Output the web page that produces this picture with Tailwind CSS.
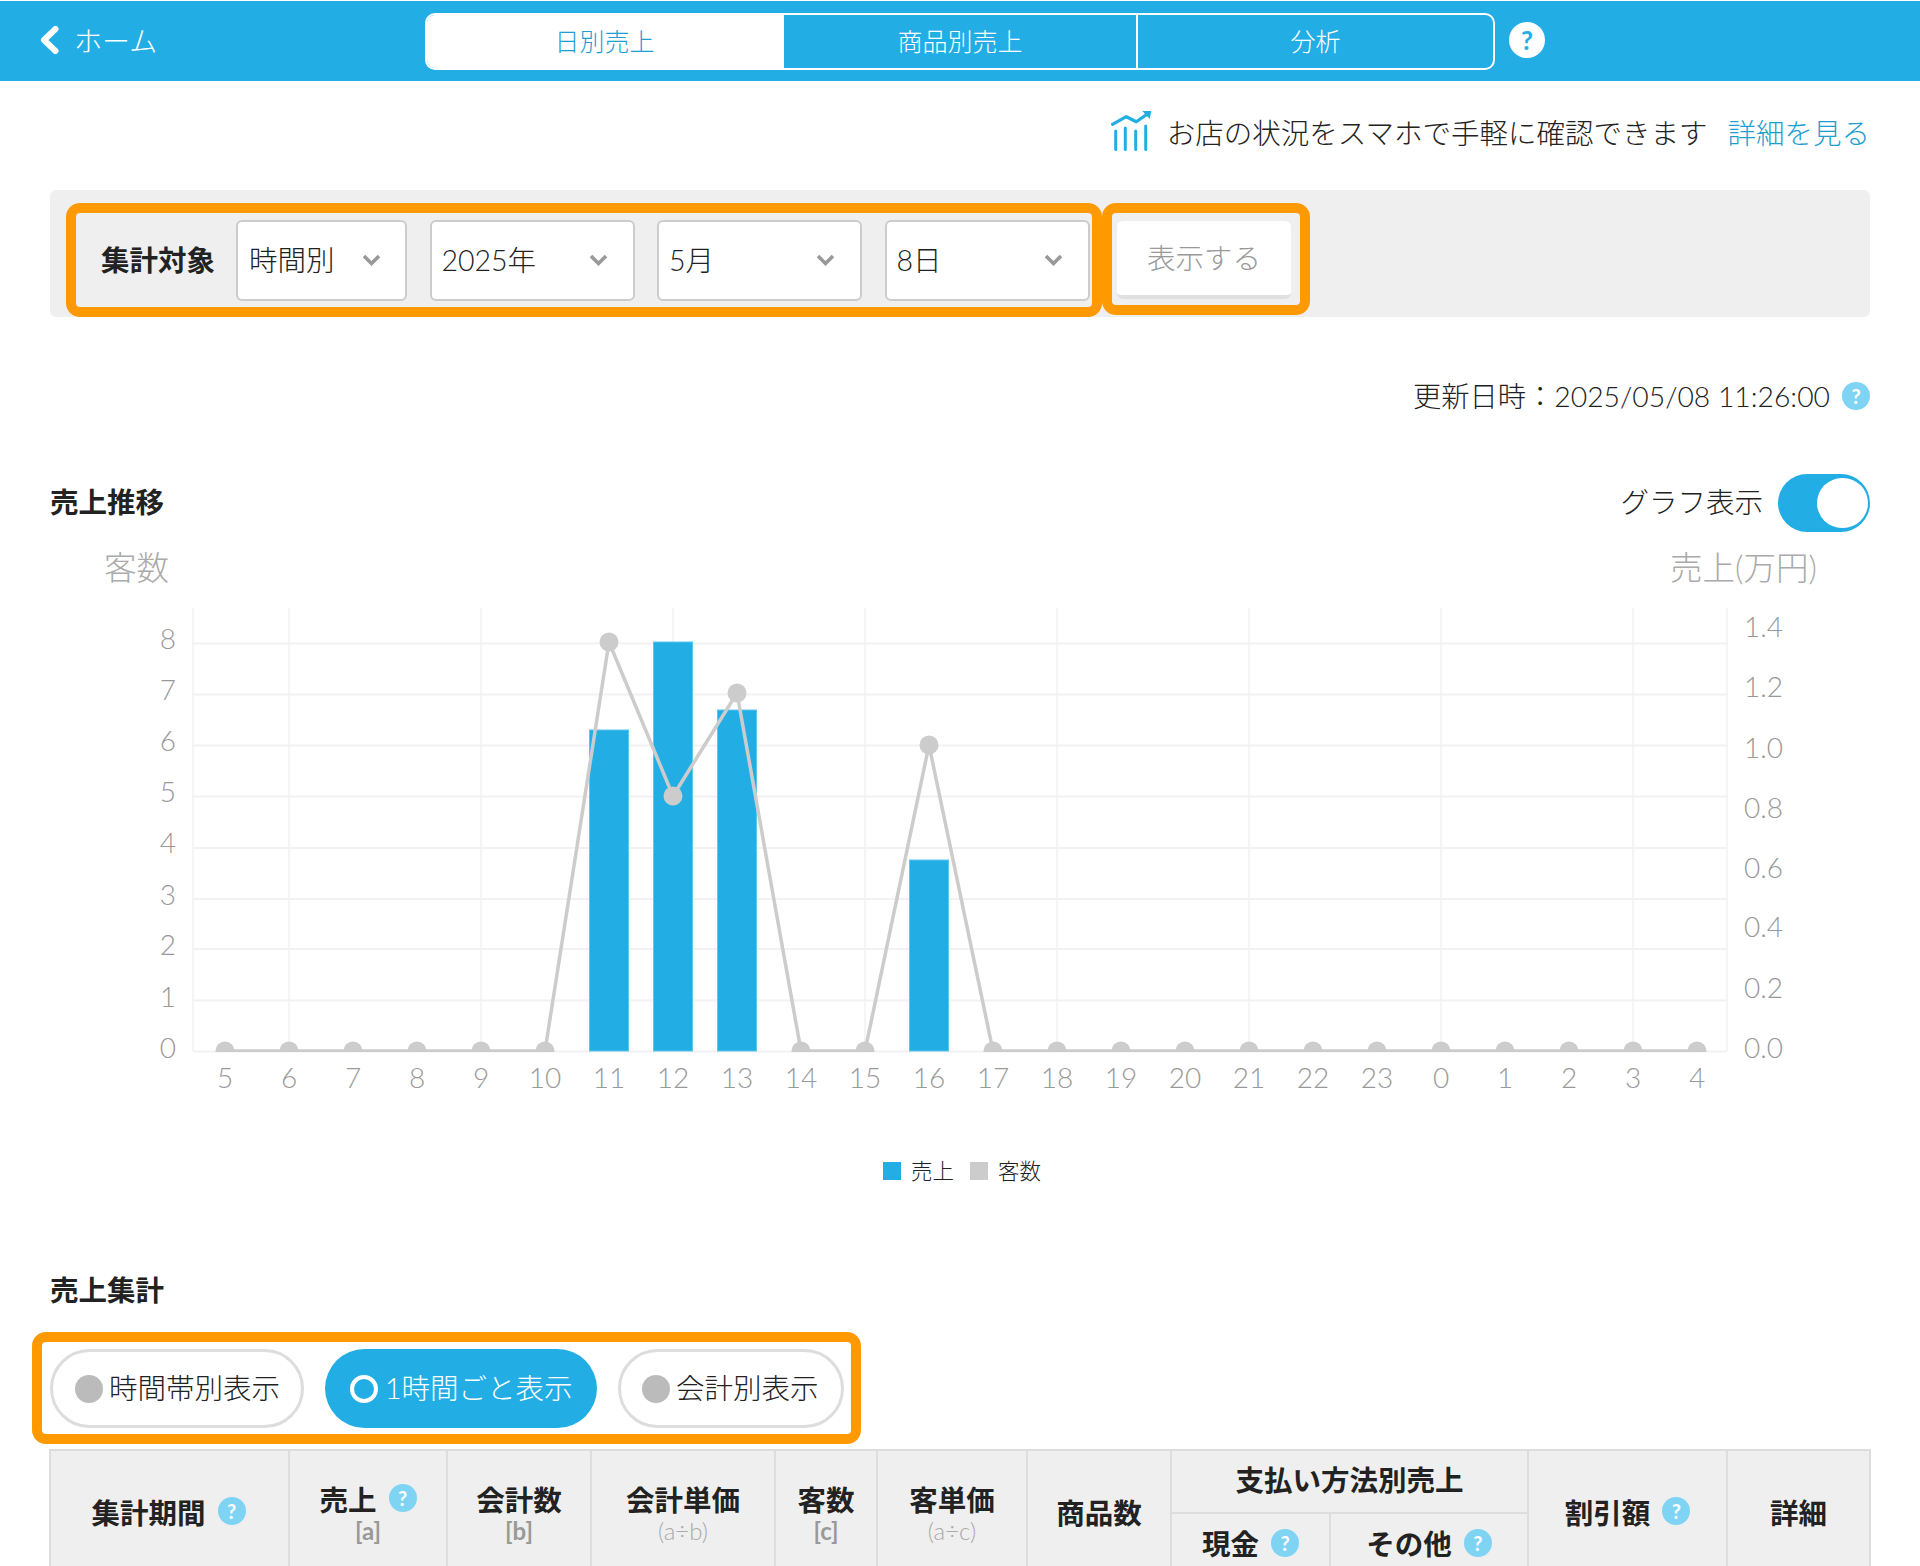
<!DOCTYPE html>
<html lang="ja">
<head>
  <meta charset="UTF-8">
  <meta name="viewport" content="width=device-width, initial-scale=1.0">
  <title>売上集計</title>
  <script src="https://cdn.jsdelivr.net/npm/@tailwindcss/browser@4"></script>
</head>
<body class="bg-white">
  <div class="w-[1920px] h-[1566px] overflow-hidden pt-px font-['Lato','Noto_Sans_CJK_JP',sans-serif] text-[28.5px] leading-none text-[#222]">

    <!-- header -->
    <header class="h-20 bg-[#22aee5] flex items-center text-white">
      <div class="w-[425px] pl-10 flex items-center gap-[15px]">
        <svg class="w-[19px] h-[28px] -mt-[2px]" viewBox="0 0 19 28" fill="none"><path d="M15.5 3 L4 14 L15.5 25" stroke="#fff" stroke-width="6" stroke-linecap="round" stroke-linejoin="round"/></svg>
        <span class="text-[28px] font-light">ホーム</span>
      </div>
      <div class="flex w-[1070px] h-[57px] border-2 border-white rounded-[10px] overflow-hidden text-[25px] font-light">
        <div class="w-[357px] pr-[2px] bg-white text-[#1f9ed1] flex items-center justify-center">日別売上</div>
        <div class="w-[354px] border-r-2 border-white flex items-center justify-center">商品別売上</div>
        <div class="flex-1 flex items-center justify-center">分析</div>
      </div>
      <span class="ml-[14px] -mt-[3px] w-9 h-9 rounded-full bg-white text-[#22aee5] font-bold text-[26px] flex items-center justify-center">?</span>
    </header>

    <main class="px-[50px]">
      <!-- notice -->
      <div class="h-[109px] flex items-center justify-end font-light">
        <svg class="w-[42px] h-[40px] mr-[14px] -mt-[9px]" viewBox="0 0 42 40" fill="none">
          <g stroke="#22aee5" stroke-width="3" stroke-linecap="round">
            <path d="M4.7 20 V38.5"/><path d="M14.3 17 V38.5"/><path d="M24.7 20 V38.5"/><path d="M34.7 15 V38.5"/>
          </g>
          <path d="M1.5 13.3 L15.3 5.7 L25.3 10.7 L36 3.2" stroke="#22aee5" stroke-width="3.2" stroke-linecap="round" stroke-linejoin="round"/>
          <path d="M31.3 0 H40.3 L38.7 8 Z" fill="#22aee5"/>
        </svg>
        <span class="-mt-[4px]">お店の状況をスマホで手軽に確認できます</span>
        <a class="-mt-[4px] ml-[20px] text-[#1f9ed1]">詳細を見る</a>
      </div>

      <!-- filter -->
      <div class="h-[127px] bg-[#efefef] rounded-md flex items-start pl-4 pt-[13px] w-[1820px]">
        <div class="w-[1036px] h-[114px] border-[10px] border-[#ff9900] rounded-[14px] flex items-center pl-[25px]">
          <span class="w-[135px] font-bold">集計対象</span>
          <div class="w-[171px] h-[81px] bg-white border-2 border-[#ccc] rounded-md flex items-center justify-between pl-[11px] pr-[24px] font-light">
            <span>時間別</span>
            <svg class="w-[19px] h-[12px]" viewBox="0 0 19 12" fill="none"><path d="M2 2 L9.5 9.5 L17 2" stroke="#999" stroke-width="3.6"/></svg>
          </div>
          <div class="ml-[22.5px] w-[205px] h-[81px] bg-white border-2 border-[#ccc] rounded-md flex items-center justify-between pl-[10px] pr-[25px] font-light">
            <span>2025年</span>
            <svg class="w-[19px] h-[12px]" viewBox="0 0 19 12" fill="none"><path d="M2 2 L9.5 9.5 L17 2" stroke="#999" stroke-width="3.6"/></svg>
          </div>
          <div class="ml-[22.5px] w-[205px] h-[81px] bg-white border-2 border-[#ccc] rounded-md flex items-center justify-between pl-[10px] pr-[25px] font-light">
            <span>5月</span>
            <svg class="w-[19px] h-[12px]" viewBox="0 0 19 12" fill="none"><path d="M2 2 L9.5 9.5 L17 2" stroke="#999" stroke-width="3.6"/></svg>
          </div>
          <div class="ml-[22.5px] w-[205px] h-[81px] bg-white border-2 border-[#ccc] rounded-md flex items-center justify-between pl-[10px] pr-[25px] font-light">
            <span>8日</span>
            <svg class="w-[19px] h-[12px]" viewBox="0 0 19 12" fill="none"><path d="M2 2 L9.5 9.5 L17 2" stroke="#999" stroke-width="3.6"/></svg>
          </div>
        </div>
        <div class="w-[208px] h-[112px] border-[10px] border-[#ff9900] rounded-[14px] flex items-center justify-center pr-[4px] pt-[2px]">
          <button class="w-[174px] h-[78px] bg-white rounded-md border-b-4 border-[#e0e0e0] text-[#999] font-light">表示する</button>
        </div>
      </div>

      <!-- updated -->
      <div class="mt-[64px] h-[29px] flex items-center justify-end gap-3 font-light">
        <span class="mt-[2px] text-[28.3px]">更新日時：2025/05/08 11:26:00</span>
        <span class="w-7 h-7 rounded-full bg-[#7fd4f4] text-white font-bold text-[20px] flex items-center justify-center">?</span>
      </div>

      <!-- trend heading -->
      <div class="mt-[64px] h-[58px] flex items-center justify-between">
        <h2 class="-mt-[2px] font-bold">売上推移</h2>
        <div class="flex items-center gap-[15px] font-light">
          <span class="-mt-[2px]">グラフ表示</span>
          <div class="w-[92px] h-[58px] rounded-full bg-[#22aee5] flex items-center justify-end pr-[2px]">
            <div class="w-[51px] h-[50px] rounded-full bg-white"></div>
          </div>
        </div>
      </div>
    </main>

    <!-- chart -->
    <svg class="block w-[1920px] h-[668px]" viewBox="0 532 1920 668" fill="none">
      <defs>
        <clipPath id="plot"><rect x="193" y="600" width="1534" height="452"/></clipPath>
      </defs>
      <g fill="#aaa" font-size="32.5" font-weight="300">
        <text x="104" y="580">客数</text>
        <text x="1670" y="580">売上(万円)</text>
      </g>

      <g stroke="#f2f2f2" stroke-width="2">
        <path d="M193 643.5 H1727"/><path d="M193 694.5 H1727"/><path d="M193 745.5 H1727"/>
        <path d="M193 796.5 H1727"/><path d="M193 848 H1727"/><path d="M193 899 H1727"/>
        <path d="M193 949 H1727"/><path d="M193 1000.5 H1727"/><path d="M193 1051.5 H1727"/>
      </g>
      <g stroke="#f2f2f2" stroke-width="1.5">
        <path d="M193 608 V1051"/><path d="M289 608 V1051"/><path d="M481 608 V1051"/>
        <path d="M673 608 V1051"/><path d="M865 608 V1051"/><path d="M1057 608 V1051"/>
        <path d="M1249 608 V1051"/><path d="M1441 608 V1051"/><path d="M1633 608 V1051"/>
        <path d="M1727 608 V1051"/>
      </g>

      <g fill="#22aee5" stroke="#5cc6ee" stroke-width="1">
        <rect x="589.5" y="730" width="39" height="321"/>
        <rect x="653.5" y="642" width="39" height="409"/>
        <rect x="717.5" y="710" width="39" height="341"/>
        <rect x="909.5" y="860" width="39" height="191"/>
      </g>

      <g clip-path="url(#plot)">
        <polyline stroke="#ccc" stroke-width="3.5" stroke-linejoin="round" points="225,1051 289,1051 353,1051 417,1051 481,1051 545,1051 609,642 673,796 737,693 801,1051 865,1051 929,745 993,1051 1057,1051 1121,1051 1185,1051 1249,1051 1313,1051 1377,1051 1441,1051 1505,1051 1569,1051 1633,1051 1697,1051"/>
        <g fill="#ccc">
          <circle cx="225" cy="1051" r="9.5"/><circle cx="289" cy="1051" r="9.5"/><circle cx="353" cy="1051" r="9.5"/>
          <circle cx="417" cy="1051" r="9.5"/><circle cx="481" cy="1051" r="9.5"/><circle cx="545" cy="1051" r="9.5"/>
          <circle cx="609" cy="642" r="9.5"/><circle cx="673" cy="796" r="9.5"/><circle cx="737" cy="693" r="9.5"/>
          <circle cx="801" cy="1051" r="9.5"/><circle cx="865" cy="1051" r="9.5"/><circle cx="929" cy="745" r="9.5"/>
          <circle cx="993" cy="1051" r="9.5"/><circle cx="1057" cy="1051" r="9.5"/><circle cx="1121" cy="1051" r="9.5"/>
          <circle cx="1185" cy="1051" r="9.5"/><circle cx="1249" cy="1051" r="9.5"/><circle cx="1313" cy="1051" r="9.5"/>
          <circle cx="1377" cy="1051" r="9.5"/><circle cx="1441" cy="1051" r="9.5"/><circle cx="1505" cy="1051" r="9.5"/>
          <circle cx="1569" cy="1051" r="9.5"/><circle cx="1633" cy="1051" r="9.5"/><circle cx="1697" cy="1051" r="9.5"/>
        </g>
      </g>

      <g fill="#999" font-size="28" font-weight="300" text-anchor="end" dominant-baseline="central">
        <text x="176" y="638">8</text><text x="176" y="689">7</text><text x="176" y="740">6</text>
        <text x="176" y="791">5</text><text x="176" y="842">4</text><text x="176" y="894">3</text>
        <text x="176" y="944">2</text><text x="176" y="996">1</text><text x="176" y="1047">0</text>
      </g>
      <g fill="#999" font-size="28" font-weight="300" dominant-baseline="central">
        <text x="1744" y="626">1.4</text><text x="1744" y="686">1.2</text><text x="1744" y="747">1.0</text>
        <text x="1744" y="807">0.8</text><text x="1744" y="867">0.6</text><text x="1744" y="926">0.4</text>
        <text x="1744" y="987">0.2</text><text x="1744" y="1047">0.0</text>
      </g>
      <g fill="#999" font-size="28" font-weight="300" text-anchor="middle" dominant-baseline="central">
        <text x="225" y="1077">5</text><text x="289" y="1077">6</text><text x="353" y="1077">7</text>
        <text x="417" y="1077">8</text><text x="481" y="1077">9</text><text x="545" y="1077">10</text>
        <text x="609" y="1077">11</text><text x="673" y="1077">12</text><text x="737" y="1077">13</text>
        <text x="801" y="1077">14</text><text x="865" y="1077">15</text><text x="929" y="1077">16</text>
        <text x="993" y="1077">17</text><text x="1057" y="1077">18</text><text x="1121" y="1077">19</text>
        <text x="1185" y="1077">20</text><text x="1249" y="1077">21</text><text x="1313" y="1077">22</text>
        <text x="1377" y="1077">23</text><text x="1441" y="1077">0</text><text x="1505" y="1077">1</text>
        <text x="1569" y="1077">2</text><text x="1633" y="1077">3</text><text x="1697" y="1077">4</text>
      </g>

      <rect x="883" y="1162" width="18" height="18" fill="#22aee5"/>
      <rect x="970" y="1162" width="18" height="18" fill="#ccc"/>
      <g fill="#222" font-size="21.5" font-weight="300" dominant-baseline="central">
        <text x="911" y="1171">売上</text>
        <text x="998" y="1171">客数</text>
      </g>
    </svg>

    <section class="px-[50px]">
      <h2 class="mt-[76px] h-7 flex items-center font-bold">売上集計</h2>

      <div class="-ml-[18px] mt-[28px] w-[829px] h-[112px] border-[10px] border-[#ff9900] rounded-[14px] bg-white flex items-start pl-2 pt-[7px] font-light">
        <div class="w-[254px] h-[79px] rounded-full border-[3px] border-[#ddd] flex items-center pl-[22px] gap-[6px]">
          <span class="w-7 h-7 rounded-full bg-[#bbb]"></span><span>時間帯別表示</span>
        </div>
        <div class="ml-[21px] w-[272px] h-[79px] rounded-full bg-[#22aee5] text-white flex items-center pl-[25px] gap-[7px]">
          <span class="w-7 h-7 rounded-full border-4 border-white"></span><span>1時間ごと表示</span>
        </div>
        <div class="ml-[21px] w-[226px] h-[79px] rounded-full border-[3px] border-[#ddd] flex items-center pl-[21px] gap-[6px]">
          <span class="w-7 h-7 rounded-full bg-[#bbb]"></span><span>会計別表示</span>
        </div>
      </div>

      <!-- summary table -->
      <table class="-ml-px mt-[5px] w-[1820px] table-fixed border-collapse bg-[#efefef] font-bold text-center [&_th]:border-2 [&_th]:border-[#ddd] [&_th]:font-bold">
        <colgroup>
          <col class="w-[239px]"><col class="w-[158px]"><col class="w-[144px]"><col class="w-[184px]"><col class="w-[102px]"><col class="w-[150px]">
          <col class="w-[144px]"><col class="w-[159px]"><col class="w-[198px]"><col class="w-[199px]"><col class="w-[143px]">
        </colgroup>
        <thead>
          <tr class="h-[63px]">
            <th rowspan="2"><span class="inline-flex items-center gap-3 -ml-[2px]">集計期間<span class="w-7 h-7 -mt-[4px] rounded-full bg-[#7fd4f4] text-white text-[20px] flex items-center justify-center">?</span></span></th>
            <th rowspan="2">
              <span class="inline-flex items-center gap-3 mt-[3px]">売上<span class="w-7 h-7 -mt-[4px] rounded-full bg-[#7fd4f4] text-white text-[20px] flex items-center justify-center">?</span></span>
              <div class="mt-[5px] text-[24px] text-[#999]">[a]</div>
            </th>
            <th rowspan="2"><span class="block mt-[3px]">会計数</span><div class="mt-[5px] text-[24px] text-[#999]">[b]</div></th>
            <th rowspan="2"><span class="block mt-[3px]">会計単価</span><div class="mt-[5px] text-[24px] font-light text-[#aaa]">(a÷b)</div></th>
            <th rowspan="2"><span class="block mt-[3px]">客数</span><div class="mt-[5px] text-[24px] text-[#999]">[c]</div></th>
            <th rowspan="2"><span class="block mt-[3px]">客単価</span><div class="mt-[5px] text-[24px] font-light text-[#aaa]">(a÷c)</div></th>
            <th rowspan="2">商品数</th>
            <th colspan="2"><span class="block -mt-[3px]">支払い方法別売上</span></th>
            <th rowspan="2"><span class="inline-flex items-center gap-3">割引額<span class="w-7 h-7 -mt-[4px] rounded-full bg-[#7fd4f4] text-white text-[20px] flex items-center justify-center">?</span></span></th>
            <th rowspan="2">詳細</th>
          </tr>
          <tr class="h-[63px]">
            <th><span class="inline-flex items-center gap-3">現金<span class="w-7 h-7 -mt-[4px] rounded-full bg-[#7fd4f4] text-white text-[20px] flex items-center justify-center">?</span></span></th>
            <th><span class="inline-flex items-center gap-3">その他<span class="w-7 h-7 -mt-[4px] rounded-full bg-[#7fd4f4] text-white text-[20px] flex items-center justify-center">?</span></span></th>
          </tr>
        </thead>
      </table>
    </section>
  </div>
</body>
</html>
